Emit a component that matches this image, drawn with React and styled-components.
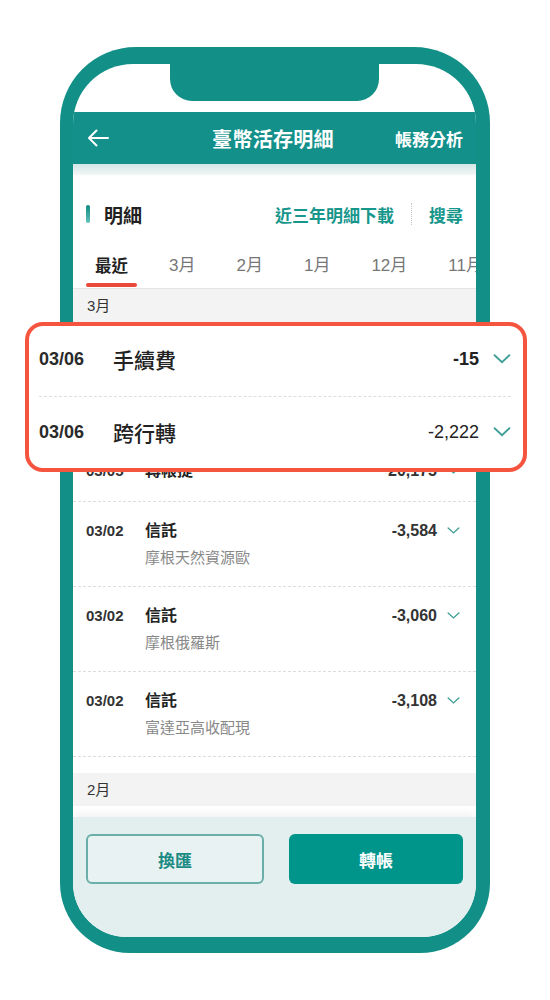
import styled, { createGlobalStyle } from "styled-components";

const GlobalStyle = createGlobalStyle`
  html, body {
    margin: 0;
    padding: 0;
    background: #fff;
  }
  body {
    font-family: "Liberation Sans", "Noto Sans CJK TC", sans-serif;
  }
`;

const recent = [
  { date: "03/06", name: "手續費", amount: "-15" },
  { date: "03/06", name: "跨行轉", amount: "-2,222" },
  { date: "03/05", name: "轉帳提", amount: "20,175" },
  { date: "03/02", name: "信託", sub: "摩根天然資源歐", amount: "-3,584" },
  { date: "03/02", name: "信託", sub: "摩根俄羅斯", amount: "-3,060" },
  { date: "03/02", name: "信託", sub: "富達亞高收配現", amount: "-3,108" },
];

const tabs = ["最近", "3月", "2月", "1月", "12月", "11月"];

const Chevron = ({ w = 13 }) => (
  <svg width={w} height={w * 0.55} viewBox="0 0 14 8" fill="none">
    <path d="M1 1l6 5.6L13 1" stroke="#3f9f97" strokeWidth="1.5" strokeLinecap="round" />
  </svg>
);

const BackArrow = () => (
  <svg width="22" height="18" viewBox="0 0 22 18" fill="none">
    <path d="M21 9H2M9.5 1.5L2 9l7.5 7.5" stroke="#fff" strokeWidth="2" strokeLinecap="round" strokeLinejoin="round" />
  </svg>
);

const App = () => {
  return (
    <Page>
      <GlobalStyle />
      <Phone>
        <Screen>
          <StatusBar>
            <Notch />
          </StatusBar>
          <Header>
            <BackArrow />
            <Title>臺幣活存明細</Title>
            <HeaderLink>帳務分析</HeaderLink>
          </Header>
          <Content>
            <TitleRow>
              <Accent />
              <SectionTitle>明細</SectionTitle>
              <Links>
                <TealLink>近三年明細下載</TealLink>
                <Divider />
                <TealLink>搜尋</TealLink>
              </Links>
            </TitleRow>
            <Tabs>
              {tabs.map((t, i) => (
                <Tab key={t} $active={i === 0}>
                  {t}
                </Tab>
              ))}
            </Tabs>
            <MonthHeader>3月</MonthHeader>
            {recent.map((r, i) => (
              <Row key={i}>
                <RowDate>{r.date}</RowDate>
                <RowMain>
                  <RowName>{r.name}</RowName>
                  {r.sub && <RowSub>{r.sub}</RowSub>}
                </RowMain>
                <RowAmount>{r.amount}</RowAmount>
                <ChevronCell>
                  <Chevron />
                </ChevronCell>
              </Row>
            ))}
            <MonthHeader $spaced>2月</MonthHeader>
            <Row>
              <RowDate>02/28</RowDate>
              <RowMain>
                <RowName>利息</RowName>
              </RowMain>
              <RowAmount>12</RowAmount>
              <ChevronCell>
                <Chevron />
              </ChevronCell>
            </Row>
          </Content>
          <BottomBar>
            <OutlineButton>換匯</OutlineButton>
            <FilledButton>轉帳</FilledButton>
          </BottomBar>
        </Screen>
      </Phone>

      <Highlight>
        <BigRow>
          <BigDate>03/06</BigDate>
          <BigName>手續費</BigName>
          <BigAmount $bold>-15</BigAmount>
          <Chevron w={18} />
        </BigRow>
        <BigRow $last>
          <BigDate>03/06</BigDate>
          <BigName>跨行轉</BigName>
          <BigAmount>-2,222</BigAmount>
          <Chevron w={18} />
        </BigRow>
      </Highlight>
    </Page>
  );
};

const Page = styled.div`
  position: relative;
  width: 550px;
  height: 1000px;
  display: flex;
  justify-content: center;
  padding-top: 47px;
  box-sizing: border-box;
  overflow: hidden;
`;

const Phone = styled.div`
  width: 430px;
  height: 906px;
  box-sizing: border-box;
  padding: 17px 14px 16px 13px;
  background: #128f86;
  border-radius: 76px 76px 70px 70px;
`;

const Screen = styled.div`
  height: 100%;
  display: flex;
  flex-direction: column;
  background: #fff;
  border-radius: 60px 60px 54px 54px;
  overflow: hidden;
`;

const StatusBar = styled.div`
  height: 48px;
  flex-shrink: 0;
  display: flex;
  justify-content: center;
`;

const Notch = styled.div`
  width: 209px;
  height: 37px;
  background: #128f86;
  border-radius: 0 0 22px 22px;
`;

const Header = styled.div`
  height: 52px;
  flex-shrink: 0;
  background: #14908a;
  display: flex;
  align-items: center;
  padding: 0 13px 0 14px;
`;

const Title = styled.div`
  flex: 1;
  text-align: center;
  color: #fff;
  font-size: 20px;
  font-weight: 700;
  letter-spacing: 0.3px;
  padding-left: 42px;
`;

const HeaderLink = styled.div`
  color: #fff;
  font-size: 17px;
  font-weight: 700;
`;

const Content = styled.div`
  flex: 1;
  overflow: hidden;
  padding-top: 12px;
  background: linear-gradient(to bottom, #d3e7e5 0, #eef6f5 10px, #fff 12px);
`;

const TitleRow = styled.div`
  height: 76px;
  display: flex;
  align-items: center;
  padding: 0 13px;
`;

const Accent = styled.div`
  width: 4px;
  height: 18px;
  border-radius: 2px;
  background: linear-gradient(to bottom, #0e8a80, #63c2b8);
  margin-right: 14px;
`;

const SectionTitle = styled.div`
  font-size: 19px;
  font-weight: 700;
  color: #222;
  flex: 1;
`;

const Links = styled.div`
  display: flex;
  align-items: center;
`;

const TealLink = styled.div`
  color: #17968c;
  font-size: 17px;
  font-weight: 700;
`;

const Divider = styled.div`
  height: 22px;
  border-left: 1px dotted #c8c8c8;
  margin: 0 17px;
`;

const Tabs = styled.div`
  display: flex;
  gap: 23px;
  padding: 0 13px;
  height: 36px;
  border-bottom: 1px solid #e6e6e6;
  overflow: hidden;
  white-space: nowrap;
`;

const Tab = styled.div`
  flex-shrink: 0;
  padding: 3px 9px 0;
  line-height: 22px;
  font-size: ${(p) => (p.$active ? "16.5px" : "17px")};
  font-weight: ${(p) => (p.$active ? 700 : 400)};
  color: ${(p) => (p.$active ? "#222" : "#777")};
  &::after {
    content: "";
    display: ${(p) => (p.$active ? "block" : "none")};
    height: 4px;
    border-radius: 2px;
    background: #e9483b;
    margin: 6px -9px 0;
  }
`;

const MonthHeader = styled.div`
  height: 33px;
  line-height: 33px;
  padding: 0 14px;
  background: #f3f3f3;
  color: #333;
  font-size: 15px;
  margin-top: ${(p) => (p.$spaced ? "16px" : "0")};
`;

const Row = styled.div`
  display: grid;
  grid-template-columns: 59px 1fr auto 23px;
  align-items: start;
  padding: 18px 16px 19px 13px;
  border-bottom: 1px dashed #dddddd;
`;

const RowDate = styled.div`
  font-size: 15px;
  font-weight: 700;
  color: #333;
  line-height: 22px;
`;

const RowMain = styled.div`
  display: flex;
  flex-direction: column;
  gap: 6px;
`;

const RowName = styled.div`
  font-size: 16px;
  font-weight: 700;
  color: #222;
  line-height: 22px;
`;

const RowSub = styled.div`
  font-size: 15px;
  color: #888;
  line-height: 20px;
  margin-bottom: -1px;
`;

const RowAmount = styled.div`
  font-size: 16px;
  font-weight: 700;
  color: #333;
  line-height: 22px;
`;

const ChevronCell = styled.div`
  height: 22px;
  display: flex;
  align-items: center;
  justify-content: flex-end;
`;

const BottomBar = styled.div`
  height: 120px;
  flex-shrink: 0;
  box-sizing: border-box;
  display: flex;
  gap: 25px;
  padding: 17px 13px 0;
  background: #e3eeee;
  box-shadow: 0 -3px 8px rgba(0, 0, 0, 0.06);
  position: relative;
`;

const ButtonBase = styled.div`
  flex: 1;
  height: 50px;
  box-sizing: border-box;
  border-radius: 6px;
  display: flex;
  align-items: center;
  justify-content: center;
  font-size: 17px;
  font-weight: 700;
`;

const OutlineButton = styled(ButtonBase)`
  border: 2px solid #6aaea9;
  background: #e8f2f2;
  color: #1b8a82;
`;

const FilledButton = styled(ButtonBase)`
  background: #00958a;
  color: #fff;
`;

const Highlight = styled.div`
  position: absolute;
  left: 25px;
  top: 322px;
  width: 502px;
  height: 150px;
  box-sizing: border-box;
  border: 4px solid #f5543f;
  border-radius: 18px;
  background: #fff;
  padding: 0 12px 0 10px;
`;

const BigRow = styled.div`
  display: flex;
  align-items: center;
  height: ${(p) => (p.$last ? "70px" : "66px")};
  padding-bottom: ${(p) => (p.$last ? "0" : "4px")};
  border-bottom: ${(p) => (p.$last ? "none" : "1px dashed #dedede")};
`;

const BigDate = styled.div`
  width: 74px;
  font-size: 18px;
  font-weight: 700;
  color: #2a2a2a;
`;

const BigName = styled.div`
  flex: 1;
  font-size: 21px;
  font-weight: 500;
  color: #222;
`;

const BigAmount = styled.div`
  font-size: 18px;
  font-weight: ${(p) => (p.$bold ? 700 : 400)};
  color: #222;
  margin-right: 14px;
`;

export default App;
